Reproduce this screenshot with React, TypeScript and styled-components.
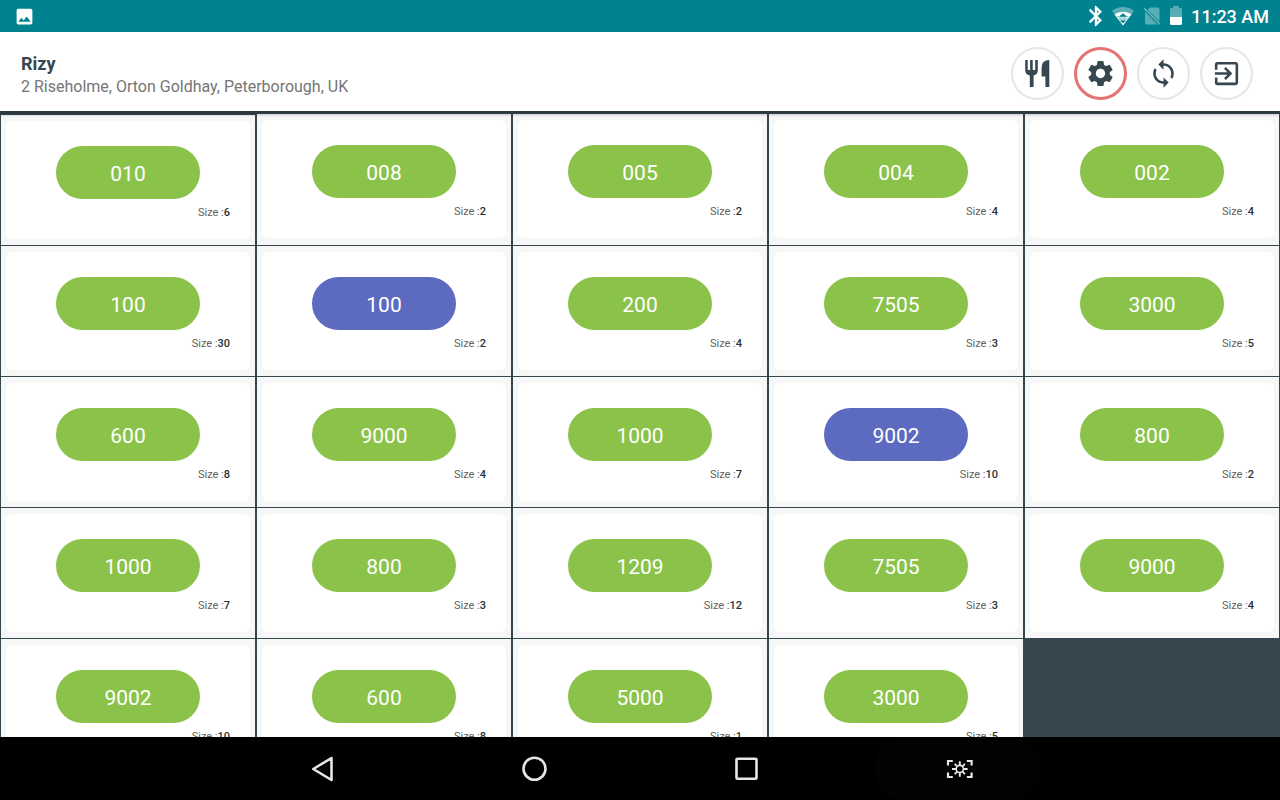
import React from "react";
import styled, { createGlobalStyle } from "styled-components";
import { MdExitToApp, MdPhoto, MdSettings, MdSync } from "react-icons/md";

const GlobalStyle = createGlobalStyle`
  *, *::before, *::after { box-sizing: border-box; }
  body { margin: 0; font-family: Roboto, "Noto Sans", sans-serif; background: #37474f; }
  button { font: inherit; color: inherit; border: 0; padding: 0; background: none; cursor: pointer; }
`;

const Screen = styled.div`
  display: flex;
  flex-direction: column;
  height: 100vh;
`;

const StatusBar = styled.div`
  display: flex;
  align-items: center;
  flex: none;
  height: 32px;
  padding: 0 11px 0 14px;
  background: #00838f;
  color: #fff;
`;

const StatusIcons = styled.div`
  display: flex;
  align-items: center;
  gap: 9px;
  margin-left: auto;
`;

const Clock = styled.time`
  font-size: 18px;
  font-weight: 500;
  line-height: 32px;
  padding-top: 1px;
`;

const Header = styled.header`
  position: relative;
  display: flex;
  align-items: center;
  justify-content: space-between;
  flex: none;
  height: 82px;
  padding: 4px 27px 0 21px;
  background: #fff;
  border-bottom: 3px solid #2c3940;
  box-shadow: 0 1px 3px rgba(0, 0, 0, 0.2);
`;

const RestaurantName = styled.h1`
  margin: 0;
  padding-top: 2px;
  font-size: 18px;
  line-height: 24px;
  font-weight: 700;
  color: #37474f;
`;

const Address = styled.p`
  margin: 0;
  font-size: 16px;
  line-height: 22px;
  color: #757575;
`;

const Actions = styled.div`
  display: flex;
  gap: 10px;
`;

const ActionButton = styled.button<{ $active?: boolean }>`
  display: grid;
  place-items: center;
  width: 53px;
  height: 53px;
  border: ${(p) => (p.$active ? "3px solid #e57373" : "2px solid #e6e6e6")};
  border-radius: 50%;
  color: #37474f;
`;

const Tables = styled.main`
  flex: 1;
  min-height: 0;
  overflow: hidden;
`;

const TableGrid = styled.ul`
  display: grid;
  grid-template-columns: repeat(5, 1fr);
  row-gap: 1px;
  margin: 0;
  padding: 0;
  list-style: none;
`;

const Cell = styled.li`
  min-width: 0;
  margin: 0 1px;
  padding: 6px 5px;
  background: #f7f7f7;

  &:first-child {
    margin-top: 1px;
  }
`;

const Card = styled.div`
  display: flex;
  flex-direction: column;
  align-items: center;
  height: 118px;
  padding: 25px 20px 0;
  border-radius: 6px;
  background: #fff;
`;

const TableButton = styled.button<{ $occupied?: boolean }>`
  width: 144px;
  height: 53px;
  padding-top: 2px;
  border-radius: 27px;
  background: ${(p) => (p.$occupied ? "#5c6bc0" : "#8bc34a")};
  color: #fff;
  font-size: 21px;
  line-height: 26px;
`;

const Size = styled.p`
  align-self: flex-end;
  margin: 7px 0 0;
  font-size: 11px;
  line-height: 14px;
  color: #616161;
`;

const SizeValue = styled.span`
  font-weight: 500;
  color: #263238;
`;

const NavBar = styled.nav`
  display: flex;
  justify-content: center;
  flex: none;
  height: 63px;
  gap: 44px;
  background: #000;
`;

const NavButton = styled.button<{ $pressed?: boolean }>`
  display: grid;
  place-items: center;
  width: 168px;
  border-radius: 32px;
  background: ${(p) => (p.$pressed ? "#020202" : "none")};
  color: #e6e6e6;
`;

const BluetoothIcon = () => (
  <svg width="14" height="24" viewBox="5 0 14 24" aria-hidden="true" fill="#fff" stroke="#fff" strokeWidth=".4">
    <path d="M17.710 7.710 12 2h-1v7.590L6.410 5 5 6.410 10.590 12 5 17.590 6.410 19 11 14.410V22h1l5.710-5.710L13.410 12ZM13 5.830l1.880 1.880L13 9.590Zm1.880 10.460L13 18.170v-3.760Z" />
  </svg>
);

const WifiIcon = () => (
  <svg width="22" height="20" viewBox="0 0 22 20" aria-hidden="true">
    <path d="M11 19.500 0 5C6-.2 16-.2 22 5Z" fill="#fff" opacity=".35" />
    <path d="M11 19.500 2.600 8.600C7.500 4.900 14.500 4.900 19.400 8.600Z" fill="#fff" />
    <path d="M11 7.600 8 10.300h6ZM5.500 10.800h11M6.800 13h8.400M8.500 14.800 11 17l2.500-2.200Z" fill="#00838f" stroke="#00838f" strokeWidth=".7" />
  </svg>
);

const NoSimIcon = () => (
  <svg width="18" height="20" viewBox="0 0 18 20" aria-hidden="true">
    <g fill="#fff" opacity=".35">
      <path d="M7 1.500h8q1.500 0 1.500 1.500v12.500L4.600 3.700Z" />
      <path d="M2 5.700 14.500 18.500H3.500Q2 18.500 2 17Z" />
    </g>
    <path d="M1.200 2.200 17 18.300" stroke="#fff" strokeOpacity=".45" strokeWidth="1.400" />
  </svg>
);

const BatteryIcon = () => (
  <svg width="12" height="20" viewBox="0 0 12 20" aria-hidden="true">
    <path d="M0 11V3.500Q0 2 1.500 2H3V0h6v2h1.500Q12 2 12 3.500V11Z" fill="#fff" opacity=".35" />
    <path d="M0 11h12v6.500q0 1.500-1.500 1.500h-9Q0 19 0 17.500Z" fill="#fff" />
  </svg>
);

const CutleryIcon = () => (
  <svg width="27" height="27" viewBox="0 0 27 27" aria-hidden="true" fill="currentColor">
    <path d="M1.200 0h2.500v10h2.400V0h2.600v10h2.500V0h2.600v10.500q0 4-4.200 5V27H5.800V15.500q-4.600-1-4.600-5Z" />
    <path d="M25.300 0v27h-3.900V16.500H17.600V7.500Q17.600 0 25.300 0Z" />
  </svg>
);

const BackIcon = () => (
  <svg width="28" height="28" viewBox="0 0 28 28" aria-hidden="true">
    <path d="M23.500 3v22L5.300 14Z" fill="none" stroke="currentColor" strokeWidth="2.600" strokeLinejoin="round" />
  </svg>
);

const HomeIcon = () => (
  <svg width="28" height="28" viewBox="0 0 28 28" aria-hidden="true">
    <circle cx="14.500" cy="13.700" r="11" fill="none" stroke="currentColor" strokeWidth="2.600" />
  </svg>
);

const RecentsIcon = () => (
  <svg width="28" height="28" viewBox="0 0 28 28" aria-hidden="true">
    <rect x="4.500" y="3.700" width="20" height="20" rx="1" fill="none" stroke="currentColor" strokeWidth="2.600" />
  </svg>
);

const CaptureIcon = () => (
  <svg width="30" height="20" viewBox="0 0 30 20" aria-hidden="true" fill="none" stroke="currentColor">
    <path d="M5 6.500V2h4.800M23.800 2h4.800v4.500M28.600 13.500V18h-4.800M9.800 18H5v-4.500" strokeWidth="2.200" />
    <circle cx="16.800" cy="10" r="3.600" strokeWidth="1.600" />
    <path d="M16.800 2.200v4M16.800 13.800v4M9 10h4M20.600 10h4M11.700 4.900l2.400 2.400M21.900 4.900l-2.400 2.400M11.700 15.100l2.400-2.400M21.900 15.100l-2.400-2.400" strokeWidth="1.900" />
  </svg>
);

type TableInfo = { number: string; size: number; occupied?: boolean };

const tables: TableInfo[] = [
  { number: "010", size: 6 },
  { number: "008", size: 2 },
  { number: "005", size: 2 },
  { number: "004", size: 4 },
  { number: "002", size: 4 },
  { number: "100", size: 30 },
  { number: "100", size: 2, occupied: true },
  { number: "200", size: 4 },
  { number: "7505", size: 3 },
  { number: "3000", size: 5 },
  { number: "600", size: 8 },
  { number: "9000", size: 4 },
  { number: "1000", size: 7 },
  { number: "9002", size: 10, occupied: true },
  { number: "800", size: 2 },
  { number: "1000", size: 7 },
  { number: "800", size: 3 },
  { number: "1209", size: 12 },
  { number: "7505", size: 3 },
  { number: "9000", size: 4 },
  { number: "9002", size: 10 },
  { number: "600", size: 8 },
  { number: "5000", size: 1 },
  { number: "3000", size: 5 },
];

export default function App() {
  return (
    <Screen>
      <GlobalStyle />
      <StatusBar>
        <MdPhoto size={21} aria-hidden="true" />
        <StatusIcons>
          <BluetoothIcon />
          <WifiIcon />
          <NoSimIcon />
          <BatteryIcon />
          <Clock>11:23 AM</Clock>
        </StatusIcons>
      </StatusBar>
      <Header>
        <div>
          <RestaurantName>Rizy</RestaurantName>
          <Address>2 Riseholme, Orton Goldhay, Peterborough, UK</Address>
        </div>
        <Actions>
          <ActionButton aria-label="Tables"><CutleryIcon /></ActionButton>
          <ActionButton aria-label="Settings" $active><MdSettings size={31} /></ActionButton>
          <ActionButton aria-label="Sync"><MdSync size={31} /></ActionButton>
          <ActionButton aria-label="Log out"><MdExitToApp size={31} /></ActionButton>
        </Actions>
      </Header>
      <Tables>
        <TableGrid>
          {tables.map((table, index) => (
            <Cell key={index}>
              <Card>
                <TableButton $occupied={table.occupied}>{table.number}</TableButton>
                <Size>
                  Size :<SizeValue>{table.size}</SizeValue>
                </Size>
              </Card>
            </Cell>
          ))}
        </TableGrid>
      </Tables>
      <NavBar>
        <NavButton aria-label="Back"><BackIcon /></NavButton>
        <NavButton aria-label="Home"><HomeIcon /></NavButton>
        <NavButton aria-label="Recent apps"><RecentsIcon /></NavButton>
        <NavButton aria-label="Capture screen" $pressed><CaptureIcon /></NavButton>
      </NavBar>
    </Screen>
  );
}
